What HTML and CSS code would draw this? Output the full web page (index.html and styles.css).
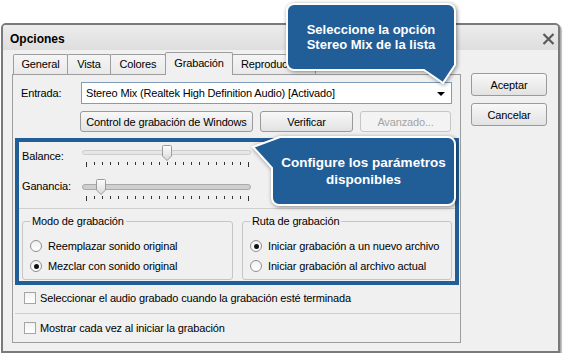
FILE: index.html
```html
<!DOCTYPE html>
<html lang="es">
<head>
  <meta charset="UTF-8" />
  <title>Opciones</title>
  <link rel="stylesheet" href="styles.css">
</head>
<body>

  <!-- Dialog window -->
  <div class="window">
    <div class="titlebar">
      <span class="title">Opciones</span>
      <svg class="close" width="13" height="12" viewBox="0 0 13 12">
        <path d="M1.5 1L11.5 11M11.5 1L1.5 11" stroke="#5a5a5a" stroke-width="2.2" fill="none"/>
      </svg>
    </div>

    <div class="content">
      <div class="left">
        <div class="tabs">
          <div class="tab t-general">General</div>
          <div class="tab t-vista">Vista</div>
          <div class="tab t-colores">Colores</div>
          <div class="tab t-grab active">Grabación</div>
          <div class="tab t-repro">Reproducción</div>
        </div>

        <div class="panel">
          <div class="entrada">
            <span class="entrada-label">Entrada:</span>
            <div class="combo">
              <span>Stereo Mix (Realtek High Definition Audio) [Activado]</span>
              <span class="arrow"></span>
            </div>
          </div>

          <div class="btnrow">
            <button class="btn b-control">Control de grabación de Windows</button>
            <button class="btn b-verificar">Verificar</button>
            <button class="btn b-avanzado" disabled>Avanzado...</button>
          </div>

          <!-- highlighted area -->
          <div class="highlight">
            <div class="slider-row row-balance">
              <span class="slider-label">Balance:</span>
              <svg width="170" height="26" viewBox="0 0 170 26">
                <defs>
                  <linearGradient id="thumb" x1="0" y1="0" x2="0" y2="1">
                    <stop offset="0" stop-color="#fdfdfd"/>
                    <stop offset="1" stop-color="#d9d9d9"/>
                  </linearGradient>
                </defs>
                <rect x="0.5" y="6.5" width="168" height="4" rx="2" fill="#e6e6e6" stroke="#cdcdcd"/>
                <path d="M4.5 18v5M12.5 18v3M20.5 18v3M28.5 18v3M36.5 18v3M45.5 18v3M53.5 18v3M61.5 18v3M69.5 18v3M77.5 18v3M85.5 18v3M93.5 18v3M101.5 18v3M109.5 18v3M117.5 18v3M126.5 18v3M134.5 18v3M142.5 18v3M150.5 18v3M158.5 18v3M166.5 18v5" stroke="#333" stroke-width="1"/>
                <path d="M80.5 2.5a1 1 0 0 1 1-1h7a1 1 0 0 1 1 1v9.5l-4.5 4.5l-4.5-4.5z" fill="url(#thumb)" stroke="#9b9b9b"/>
              </svg>
            </div>
            <div class="slider-row row-ganancia">
              <span class="slider-label">Ganancia:</span>
              <svg width="170" height="26" viewBox="0 0 170 26">
                <rect x="0.5" y="6.5" width="168" height="5" rx="2.5" fill="#cfcfcf" stroke="#a9a9a9"/>
                <path d="M4.5 18v5M12.5 18v3M20.5 18v3M28.5 18v3M36.5 18v3M45.5 18v3M53.5 18v3M61.5 18v3M69.5 18v3M77.5 18v3M85.5 18v3M93.5 18v3M101.5 18v3M109.5 18v3M117.5 18v3M126.5 18v3M134.5 18v3M142.5 18v3M150.5 18v3M158.5 18v3M166.5 18v5" stroke="#333" stroke-width="1"/>
                <path d="M14.5 2.5a1 1 0 0 1 1-1h7a1 1 0 0 1 1 1v9.5l-4.5 4.5l-4.5-4.5z" fill="url(#thumb)" stroke="#9b9b9b"/>
              </svg>
            </div>

            <div class="sep"></div>

            <div class="groups">
              <fieldset class="group g-modo">
                <legend>Modo de grabación</legend>
                <div class="radio-row"><span class="radio"></span>Reemplazar sonido original</div>
                <div class="radio-row"><span class="radio checked"></span>Mezclar con sonido original</div>
              </fieldset>
              <fieldset class="group g-ruta">
                <legend>Ruta de grabación</legend>
                <div class="radio-row"><span class="radio checked"></span>Iniciar grabación a un nuevo archivo</div>
                <div class="radio-row"><span class="radio"></span>Iniciar grabación al archivo actual</div>
              </fieldset>
            </div>
          </div>

          <div class="check-row first"><span class="checkbox"></span>Seleccionar el audio grabado cuando la grabación esté terminada</div>
          <div class="panel-sep"></div>
          <div class="check-row"><span class="checkbox"></span>Mostrar cada vez al iniciar la grabación</div>
        </div>
      </div>

      <div class="right">
        <button class="btn side">Aceptar</button>
        <button class="btn side">Cancelar</button>
      </div>
    </div>
  </div>

  <!-- Callouts -->
  <div class="callout c1">
    <svg class="bubble" width="172" height="86" viewBox="0 0 172 86">
      <path d="M9 3H163a7 7 0 0 1 7 7V64L158 82L139 69H9a7 7 0 0 1-7-7V10a7 7 0 0 1 7-7Z" fill="#215e98" stroke="#fff" stroke-width="2"/>
    </svg>
    <p class="callout-text">Seleccione la opción<br>Stereo Mix de la lista</p>
  </div>

  <div class="callout c2">
    <svg class="bubble" width="208" height="74" viewBox="0 0 208 74">
      <path d="M3 13L30 3H198a7 7 0 0 1 7 7V64a7 7 0 0 1-7 7H29a7 7 0 0 1-7-7V34Z" fill="#215e98" stroke="#fff" stroke-width="2"/>
    </svg>
    <p class="callout-text">Configure los parámetros<br>disponibles</p>
  </div>

</body>
</html>
```

FILE: styles.css
```css
body {
  margin: 0;
  background: #fff;
  font-family: "Liberation Sans", Arial, sans-serif;
  font-size: 11px;
  letter-spacing: -0.15px;
  color: #000;
}

.window {
  box-sizing: border-box;
  width: 559px;
  height: 330px;
  margin: 23px 0 0 1px;
  border: 2px solid #7a7a7a;
  border-radius: 5px 5px 0 0;
  background: #f0f0f0;
  box-shadow: 1px 1px 0 #a8a8a8, 2px 2px 1px rgba(0, 0, 0, 0.25);
}

.titlebar {
  height: 25px;
  display: flex;
  align-items: center;
  justify-content: space-between;
  padding: 0 3px 0 7px;
  background: linear-gradient(#ececec, #dedede);
  border-radius: 3px 3px 0 0;
}

.title {
  font-weight: bold;
  font-size: 12px;
  letter-spacing: 0;
  margin-top: 2px;
}

.close {
  margin-top: 2px;
}

.content {
  display: flex;
  padding: 2px 0 0 9px;
}

.left {
  width: 449px;
}

/* tabs */
.tabs {
  display: flex;
  align-items: flex-end;
  height: 22px;
  padding-left: 1px;
}

.tab {
  box-sizing: border-box;
  height: 20px;
  margin-right: -1px;
  border: 1px solid #9d9d9d;
  border-bottom: none;
  border-radius: 2px 2px 0 0;
  text-align: center;
  line-height: 19px;
  background: linear-gradient(#f5f5f5, #e9e9e9);
}

.t-general { width: 55px; }
.t-vista { width: 44px; }
.t-colores { width: 56px; }
.t-grab { width: 68px; }
.t-repro { width: 84px; }

.tab.active {
  height: 23px;
  margin-bottom: -1px;
  line-height: 20px;
  background: #f0f0f0;
  position: relative;
  z-index: 1;
}

.panel {
  box-sizing: border-box;
  height: 269px;
  border: 1px solid #9d9d9d;
  padding-top: 7px;
  background: #f0f0f0;
}

.entrada {
  display: flex;
  align-items: center;
  padding-left: 8px;
}

.entrada-label {
  width: 60px;
}

.combo {
  box-sizing: border-box;
  width: 371px;
  height: 22px;
  display: flex;
  align-items: center;
  justify-content: space-between;
  padding: 0 6px 0 4px;
  border: 1px solid #7f9db9;
  background: #fff;
}

.arrow {
  width: 0;
  height: 0;
  border-left: 4px solid transparent;
  border-right: 4px solid transparent;
  border-top: 4px solid #000;
  margin-top: 2px;
}

/* buttons */
.btnrow {
  display: flex;
  gap: 7px;
  padding-left: 67px;
  margin-top: 7px;
}

.btn {
  box-sizing: border-box;
  height: 21px;
  padding: 0;
  border: 1px solid #9a9a9a;
  border-radius: 3px;
  background: linear-gradient(#f8f8f8, #e2e2e2);
  font-family: "Liberation Sans", Arial, sans-serif;
  font-size: 11px;
  letter-spacing: -0.15px;
  color: #000;
}

.b-control { width: 173px; }
.b-verificar { width: 93px; }
.b-avanzado {
  width: 91px;
  color: #a3a3a3;
  border-color: #c6c6c6;
  background: #f3f3f3;
}

/* highlighted block */
.highlight {
  box-sizing: border-box;
  height: 147px;
  margin: 6px 1px 0 2px;
  border: 4px solid #215e98;
}

.slider-row {
  display: flex;
  padding-left: 3px;
}

.slider-label {
  width: 60px;
  line-height: 14px;
}

.row-balance { margin-top: 2px; }
.row-balance .slider-label { padding-top: 5px; }
.row-ganancia { margin-top: 8px; }
.row-ganancia .slider-label { padding-top: 1px; }

.sep {
  height: 1px;
  margin-top: 4px;
  background: #cfcfcf;
}

.groups {
  display: flex;
  gap: 9px;
  padding-left: 3px;
  margin-top: 5px;
}

.group {
  box-sizing: border-box;
  margin: 0;
  padding: 8px 0 3px 7px;
  border: 1px solid #c6c6c6;
  border-radius: 3px;
}

.g-modo { width: 211px; }
.g-ruta { width: 210px; }

.group legend {
  padding: 0 2px;
  line-height: 14px;
}

.radio-row {
  display: flex;
  align-items: center;
  height: 20px;
}

.radio {
  box-sizing: border-box;
  width: 12px;
  height: 12px;
  margin-right: 6px;
  border: 1px solid #8f8f8f;
  border-radius: 50%;
  background: linear-gradient(#f0f0f0, #fff);
  display: flex;
  align-items: center;
  justify-content: center;
}

.radio.checked::after {
  content: "";
  width: 5px;
  height: 5px;
  border-radius: 50%;
  background: #111;
}

/* checkboxes */
.check-row {
  display: flex;
  align-items: center;
  height: 18px;
  padding-left: 11px;
  margin-top: 5px;
}

.check-row.first {
  margin-top: 4px;
}

.checkbox {
  box-sizing: border-box;
  width: 12px;
  height: 12px;
  margin-right: 4px;
  border: 1px solid #a5a5a5;
  background: linear-gradient(#f2f2f2, #fff);
}

.panel-sep {
  height: 1px;
  margin: 6px 0 0 2px;
  background: #cdcdcd;
}

/* side buttons */
.right {
  display: flex;
  flex-direction: column;
  gap: 7px;
  margin-left: 10px;
  padding-top: 21px;
}

.btn.side {
  width: 76px;
  height: 23px;
}

/* callouts */
.callout {
  position: absolute;
}

.bubble {
  display: block;
  filter: drop-shadow(1px 1px 2px rgba(0, 0, 0, 0.45));
}

.callout-text {
  position: absolute;
  margin: 0;
  text-align: center;
  font-weight: bold;
  letter-spacing: 0;
  color: #fff;
}

.c1 {
  left: 285px;
  top: 1px;
}

.c1 .callout-text {
  left: 2px;
  top: 21px;
  width: 168px;
  font-size: 13px;
  line-height: 15px;
}

.c2 {
  left: 250px;
  top: 134px;
}

.c2 .callout-text {
  left: 22px;
  top: 20px;
  width: 183px;
  font-size: 13.5px;
  line-height: 17px;
}
```
